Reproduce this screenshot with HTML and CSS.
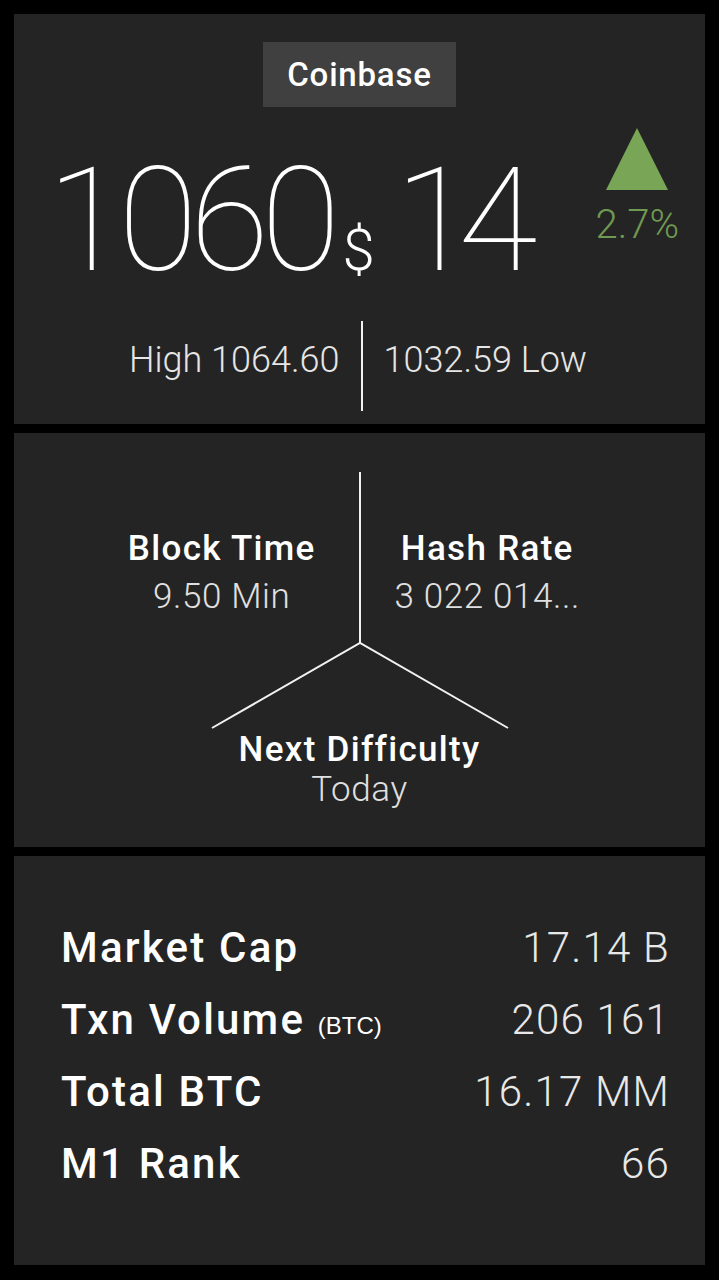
FILE: index.html
```html
<!DOCTYPE html>
<html lang="en">
<head>
<meta charset="utf-8">
<title>Bitcoin Ticker</title>
<link rel="stylesheet" href="styles.css">
</head>
<body>
<main class="screen">
  <section class="panel panel-price">
    <div class="exchange">Coinbase</div>
    <div class="price-row">
      <div class="price">
        <span class="price-int">1060</span><span class="price-cur">$</span><span class="price-dec">14</span>
      </div>
      <div class="change">
        <svg class="change-arrow" width="62" height="62" viewBox="0 0 62 62"><polygon points="31,0 62,62 0,62" fill="#79a556"/></svg>
        <span class="change-val">2.7%</span>
      </div>
    </div>
    <div class="hilo">
      <span class="hilo-text hilo-high">High 1064.60</span>
      <span class="hilo-sep"></span>
      <span class="hilo-text hilo-low">1032.59 Low</span>
    </div>
  </section>

  <section class="panel panel-network">
    <svg class="tree" width="691" height="414" viewBox="0 0 691 414">
      <polyline points="346,39 346,210" fill="none" stroke="#f2f2f2" stroke-width="2"/>
      <polyline points="198,295 346,210 494,295" fill="none" stroke="#f2f2f2" stroke-width="2"/>
    </svg>
    <div class="net-top">
      <div class="net-item net-left">
        <div class="net-label">Block Time</div>
        <div class="net-value">9.50 Min</div>
      </div>
      <div class="net-item net-right">
        <div class="net-label">Hash Rate</div>
        <div class="net-value">3 022 014...</div>
      </div>
    </div>
    <div class="net-item net-bottom">
      <div class="net-label">Next Difficulty</div>
      <div class="net-value">Today</div>
    </div>
  </section>

  <section class="panel panel-stats">
    <div class="stat"><span class="stat-label">Market Cap</span><span class="stat-value">17.14 B</span></div>
    <div class="stat"><span class="stat-label">Txn Volume <small class="stat-unit">(BTC)</small></span><span class="stat-value">206 161</span></div>
    <div class="stat"><span class="stat-label">Total BTC</span><span class="stat-value">16.17 MM</span></div>
    <div class="stat"><span class="stat-label">M1 Rank</span><span class="stat-value">66</span></div>
  </section>
</main>
</body>
</html>
```

FILE: styles.css
```css
* { box-sizing: border-box; }

html, body {
  margin: 0;
  padding: 0;
  background: #000;
}

body {
  font-family: Roboto, "Liberation Sans", sans-serif;
  color: #fff;
}

.screen {
  width: 719px;
  height: 1280px;
  padding: 14px 14px 15px;
  display: flex;
  flex-direction: column;
  gap: 9px;
}

.panel {
  background: #242424;
  width: 100%;
}

/* ---------- price panel ---------- */
.panel-price {
  height: 410px;
  display: flex;
  flex-direction: column;
  align-items: center;
  padding-top: 28px;
}

.exchange {
  height: 65px;
  padding: 0 24px;
  background: #404040;
  display: flex;
  align-items: center;
  font-size: 33px;
  font-weight: 500;
  letter-spacing: 0.8px;
  color: #fff;
}

.price-row {
  width: 100%;
  display: flex;
  align-items: flex-start;
  justify-content: space-between;
  padding: 21px 26px 0 33px;
}

.price {
  display: flex;
  align-items: baseline;
  margin-top: 20px;
  line-height: 1;
}

.price-int,
.price-dec {
  font-size: 145px;
  font-weight: 100;
  letter-spacing: -8px;
}

.price-dec { letter-spacing: -16px; }

.price-cur {
  font-size: 58px;
  font-weight: 300;
  margin: 0 20px 0 10px;
}

.change {
  display: flex;
  flex-direction: column;
  align-items: center;
  gap: 15px;
}

.change-arrow { display: block; }

.change-val {
  font-size: 40px;
  font-weight: 300;
  line-height: 1;
  color: #6f9a52;
}

.hilo {
  margin-top: 28px;
  display: flex;
  align-items: center;
  gap: 21px;
  margin-right: 3px;
}

.hilo-text {
  font-size: 36px;
  font-weight: 300;
  color: #e6e6e6;
  padding-bottom: 12px;
}

.hilo-sep {
  width: 2px;
  height: 90px;
  background: #f2f2f2;
}

/* ---------- network panel ---------- */
.panel-network {
  height: 414px;
  position: relative;
  padding-top: 92px;
}

.tree {
  position: absolute;
  left: 0;
  top: 0;
}

.net-top {
  display: grid;
  grid-template-columns: 1fr 1fr;
}

.net-item {
  text-align: center;
  font-size: 35px;
  line-height: 48px;
}

.net-left { padding-left: 70px; }
.net-right { padding-right: 90px; }

.net-label {
  font-weight: 500;
  letter-spacing: 1.3px;
  color: #fff;
}

.net-value {
  font-weight: 300;
  letter-spacing: 0.6px;
  color: #e0e0e0;
}

.net-bottom {
  margin-top: 109px;
  line-height: 40px;
}

/* ---------- stats panel ---------- */
.panel-stats {
  height: 409px;
  padding: 56px 36px 0 47px;
}

.stat {
  display: flex;
  justify-content: space-between;
  align-items: baseline;
  height: 72px;
  line-height: 72px;
  font-size: 42px;
}

.stat-label {
  font-weight: 500;
  letter-spacing: 2.2px;
  color: #fff;
}

.stat-unit {
  font-family: "Liberation Sans", Arial, sans-serif;
  font-size: 24px;
  font-weight: 400;
  letter-spacing: 0;
}

.stat-value {
  font-weight: 300;
  letter-spacing: 1.2px;
  margin-right: -1px;
  color: #e8e8e8;
}
```
